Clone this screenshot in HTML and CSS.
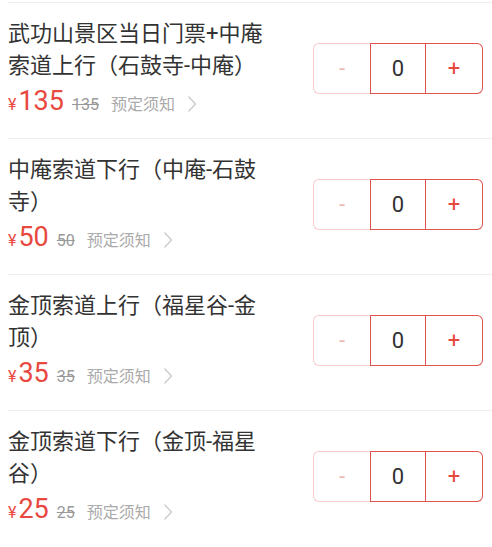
FILE: index.html
```html
<!DOCTYPE html>
<html lang="zh-CN">
<head>
    <meta charset="UTF-8">
    <meta name="viewport" content="width=device-width, initial-scale=1.0">
    <title>门票</title>
    <link rel="stylesheet" href="styles.css">
</head>
<body>
<div class="ticket-list">
    <div class="ticket">
        <div class="info">
            <div class="name">武功山景区当日门票+中庵索道上行（石鼓寺-中庵）</div>
            <div class="price-line">
                <span class="yen">¥</span><span class="price">135</span>
                <span class="old">135</span>
                <span class="notice">预定须知</span>
                <svg class="arrow" width="10" height="18" viewBox="0 0 10 18"><path d="M1.5 1.5 L8.5 9 L1.5 16.5" fill="none" stroke="#c8c8c8" stroke-width="1.2"/></svg>
            </div>
        </div>
        <div class="stepper">
            <div class="minus">-</div>
            <div class="count">0</div>
            <div class="plus">+</div>
        </div>
    </div>
    <div class="ticket">
        <div class="info">
            <div class="name">中庵索道下行（中庵-石鼓寺）</div>
            <div class="price-line">
                <span class="yen">¥</span><span class="price">50</span>
                <span class="old">50</span>
                <span class="notice">预定须知</span>
                <svg class="arrow" width="10" height="18" viewBox="0 0 10 18"><path d="M1.5 1.5 L8.5 9 L1.5 16.5" fill="none" stroke="#c8c8c8" stroke-width="1.2"/></svg>
            </div>
        </div>
        <div class="stepper">
            <div class="minus">-</div>
            <div class="count">0</div>
            <div class="plus">+</div>
        </div>
    </div>
    <div class="ticket">
        <div class="info">
            <div class="name">金顶索道上行（福星谷-金顶）</div>
            <div class="price-line">
                <span class="yen">¥</span><span class="price">35</span>
                <span class="old">35</span>
                <span class="notice">预定须知</span>
                <svg class="arrow" width="10" height="18" viewBox="0 0 10 18"><path d="M1.5 1.5 L8.5 9 L1.5 16.5" fill="none" stroke="#c8c8c8" stroke-width="1.2"/></svg>
            </div>
        </div>
        <div class="stepper">
            <div class="minus">-</div>
            <div class="count">0</div>
            <div class="plus">+</div>
        </div>
    </div>
    <div class="ticket">
        <div class="info">
            <div class="name">金顶索道下行（金顶-福星谷）</div>
            <div class="price-line">
                <span class="yen">¥</span><span class="price">25</span>
                <span class="old">25</span>
                <span class="notice">预定须知</span>
                <svg class="arrow" width="10" height="18" viewBox="0 0 10 18"><path d="M1.5 1.5 L8.5 9 L1.5 16.5" fill="none" stroke="#c8c8c8" stroke-width="1.2"/></svg>
            </div>
        </div>
        <div class="stepper">
            <div class="minus">-</div>
            <div class="count">0</div>
            <div class="plus">+</div>
        </div>
    </div>
</div>
</body>
</html>
```

FILE: styles.css
```css
body{
    margin: 0;
    background: #fff;
    font-family: Roboto, "Noto Sans CJK SC", sans-serif;
}
.ticket-list{
    margin-left: 8px;
    padding-top: 2px;
}
.ticket{
    display: flex;
    align-items: center;
    border-top: 1px solid #eeeeee;
    padding: 14px 0 18px;
    height: 103px;
}
.info{
    width: 262px;
}
.name{
    font-size: 22px;
    line-height: 32px;
    color: #333;
}
.price-line{
    display: flex;
    align-items: baseline;
    height: 34px;
    margin-top: 3px;
}
.yen{
    font-size: 16px;
    color: #e8493f;
    margin-right: 2px;
}
.price{
    font-size: 27px;
    color: #e8493f;
    margin-right: 8px;
}
.old{
    font-size: 16px;
    color: #999;
    text-decoration: line-through;
    margin-right: 12px;
}
.notice{
    font-size: 16px;
    color: #aaa;
    margin-right: 12px;
}
.arrow{
    align-self: center;
    margin-top: 4px;
}
.stepper{
    display: flex;
    margin-left: auto;
    margin-right: 9px;
    height: 51px;
}
.stepper div{
    display: flex;
    align-items: center;
    justify-content: center;
    box-sizing: border-box;
    font-size: 22px;
}
.minus{
    width: 57px;
    border: 1px solid #f7cbcb;
    border-right: none;
    border-radius: 6px 0 0 6px;
    color: #f3b9b9;
}
.count{
    width: 56px;
    border: 1px solid #df534c;
    color: #333;
}
.plus{
    width: 57px;
    border: 1px solid #df534c;
    border-left: none;
    border-radius: 0 6px 6px 0;
    color: #e8493f;
}
```
